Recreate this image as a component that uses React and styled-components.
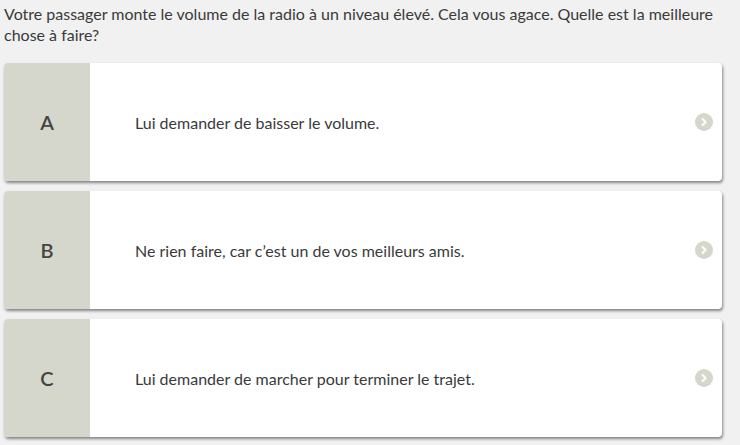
import React from "react";
import styled, {createGlobalStyle} from "styled-components";

const GlobalStyle = createGlobalStyle`
  html, body {
    margin: 0;
    padding: 0;
    background: #f1f1f1;
  }
  body {
    font-family: Lato, "Open Sans", sans-serif;
    color: #333;
  }
`;

const Page = styled.div`
  padding: 3px 18px 8px 4px;
`;

const Question = styled.p`
  margin: 0 0 18px 0;
  font-size: 16px;
  line-height: 21px;
  color: #3a3a3a;
`;

const Answers = styled.div`
  display: flex;
  flex-direction: column;
  gap: 10px;
`;

const AnswerCard = styled.div`
  display: flex;
  height: 118px;
  background: white;
  border-radius: 4px;
  overflow: hidden;
  box-shadow: 1px 2px 3px rgba(0, 0, 0, 0.45);
  cursor: pointer;
`;

const Letter = styled.div`
  width: 86px;
  flex-shrink: 0;
  background: #d5d7cd;
  display: flex;
  align-items: center;
  justify-content: center;
  font-size: 20px;
  font-weight: 600;
  color: #444;
`;

const AnswerText = styled.div`
  flex: 1;
  display: flex;
  align-items: center;
  padding-left: 45px;
  font-size: 16px;
  color: #3a3a3a;
`;

const Arrow = styled.div`
  width: 18px;
  height: 18px;
  border-radius: 50%;
  background: #d5d7cd;
  align-self: center;
  margin-right: 9px;
  display: flex;
  align-items: center;
  justify-content: center;
`;

const answers = [
    {letter: "A", text: "Lui demander de baisser le volume."},
    {letter: "B", text: "Ne rien faire, car c’est un de vos meilleurs amis."},
    {letter: "C", text: "Lui demander de marcher pour terminer le trajet."},
];

const Chevron = () => (
    <svg width="10" height="10" viewBox="0 0 10 10">
        <path d="M3.6 2 L6.6 5 L3.6 8" fill="none" stroke="white" strokeWidth="2" strokeLinecap="round"
              strokeLinejoin="round"/>
    </svg>
);

export default function App() {
    return (
        <Page>
            <GlobalStyle/>
            <Question>
                Votre passager monte le volume de la radio à un niveau élevé. Cela vous agace. Quelle est la
                meilleure chose à faire?
            </Question>
            <Answers>
                {answers.map(a => (
                    <AnswerCard key={a.letter}>
                        <Letter>{a.letter}</Letter>
                        <AnswerText>{a.text}</AnswerText>
                        <Arrow><Chevron/></Arrow>
                    </AnswerCard>
                ))}
            </Answers>
        </Page>
    );
}
